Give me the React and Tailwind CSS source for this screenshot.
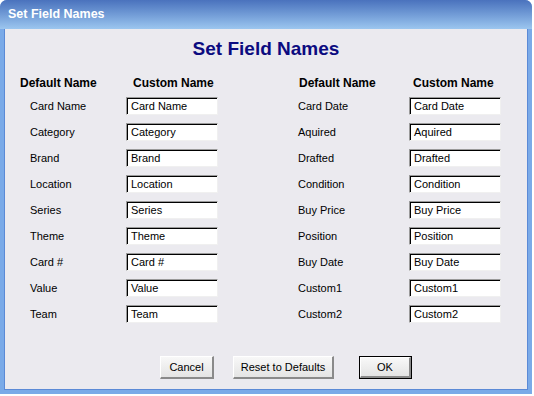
const LEFT = ['Card Name', 'Category', 'Brand', 'Location', 'Series', 'Theme', 'Card #', 'Value', 'Team']
const RIGHT = ['Card Date', 'Aquired', 'Drafted', 'Condition', 'Buy Price', 'Position', 'Buy Date', 'Custom1', 'Custom2']

const font = { fontFamily: '"Liberation Sans", Arial, sans-serif' }

function Field({ value }) {
  return (
    <div className="h-[18px] w-[92px] border-t border-l border-t-[#9a9a9a] border-l-[#9a9a9a] border-b border-r border-b-[#f0f0f0] border-r-[#f0f0f0]">
      <div className="flex h-full items-center border-t border-l border-[#000] bg-white pl-[3px] text-[11px] leading-none text-black">
        {value}
      </div>
    </div>
  )
}

function Column({ names, labelPad, inputLeft, headPad, customLeft }) {
  return (
    <div className="flex flex-col">
      <div className="flex h-[14px] items-center text-[12px] font-bold text-black">
        <span style={{ paddingLeft: headPad }} className="w-0 whitespace-nowrap">Default Name</span>
        <span style={{ marginLeft: customLeft }} className="whitespace-nowrap">Custom Name</span>
      </div>
      <div className="mt-[3px] flex flex-col">
        {names.map((n) => (
          <div key={n} className="flex h-[26px] items-center">
            <span style={{ paddingLeft: labelPad, width: inputLeft }} className="shrink-0 text-[11px] text-black">{n}</span>
            <Field value={n} />
          </div>
        ))}
      </div>
    </div>
  )
}

function Button({ children, className = '', primary }) {
  return (
    <div className={`${primary ? 'border border-black' : ''} ${className}`}>
      <div className="flex h-full items-center justify-center border-t border-l border-white border-b-2 border-r-2 border-b-[#8a8a8a] border-r-[#8a8a8a] bg-gradient-to-b from-[#f8f8f8] to-[#e4e4e4] text-[11px] text-black">
        {children}
      </div>
    </div>
  )
}

export default function App() {
  return (
    <div className="h-[396px] w-[534px] bg-white" style={font}>
      <div className="flex h-[394px] w-[532px] flex-col overflow-hidden rounded-t-[7px] bg-[#5f8fd8]">
        {/* title bar */}
        <div className="flex h-[29px] shrink-0 items-center bg-gradient-to-b from-[#4a72bd] to-[#9cc6ef] pl-[8px] text-[12.5px] font-bold text-white">
          Set Field Names
        </div>
        {/* body */}
        <div className="flex flex-1 flex-col border-l-[4px] border-r-[4px] border-b-[4px] border-[#7aaae8]">
          <div className="flex flex-1 flex-col border border-[#5b8ad6] border-t-0 bg-[#ebeaef]">
            <div className="mt-[9px] text-center text-[19px] font-bold leading-[22px] text-[#0b0b80]">Set Field Names</div>
            <div className="mt-[16px] flex">
              <div className="w-[272px] shrink-0">
                <Column names={LEFT} labelPad={25} inputLeft={121} headPad={15} customLeft={113} />
              </div>
              <div>
                <Column names={RIGHT} labelPad={21} inputLeft={132} headPad={22} customLeft={114} />
              </div>
            </div>
            <div className="mt-[29px] flex">
              <Button className="ml-[155px] h-[23px] w-[54px]">Cancel</Button>
              <Button className="ml-[19px] h-[23px] w-[101px]">Reset to Defaults</Button>
              <Button primary className="ml-[25px] h-[23px] w-[53px]">OK</Button>
            </div>
          </div>
        </div>
      </div>
    </div>
  )
}
